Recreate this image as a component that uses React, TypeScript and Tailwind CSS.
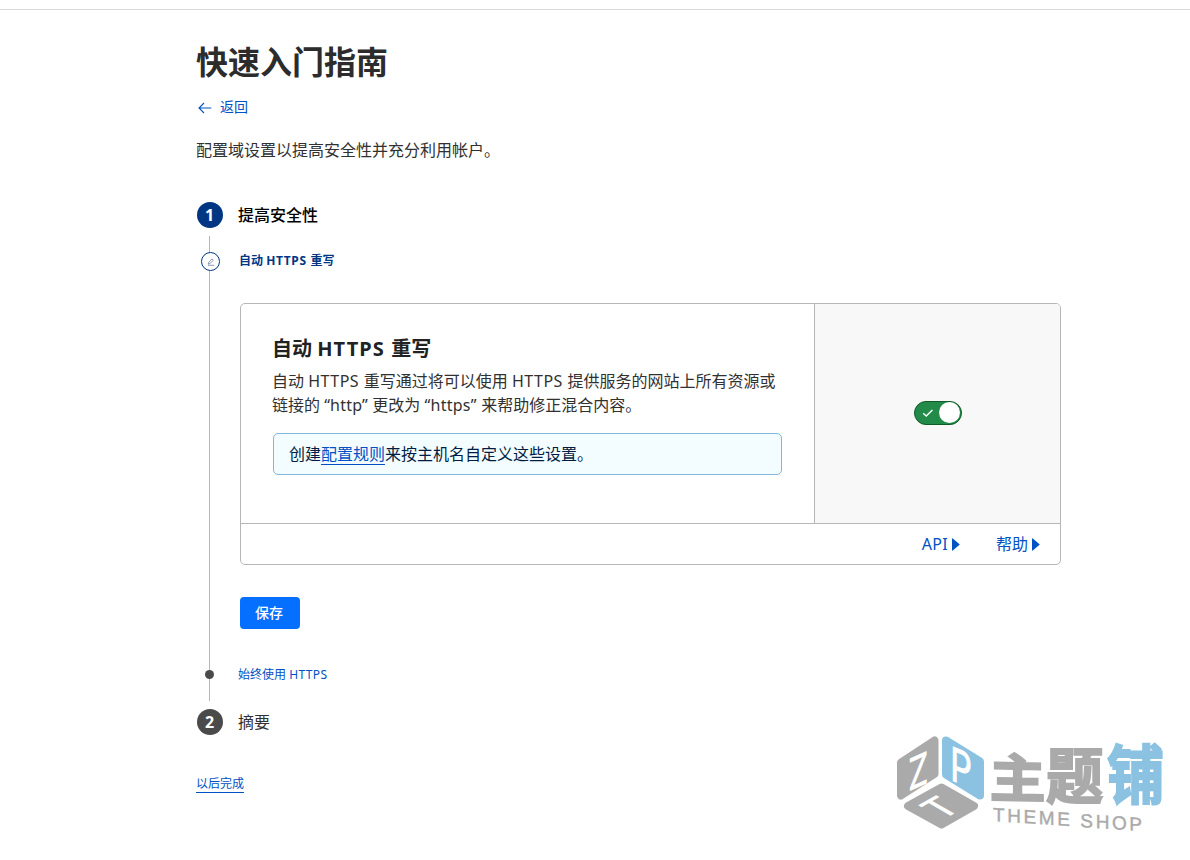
import type { ReactNode } from 'react';

function StepTitle({ index, children, active }: { index: number; children: ReactNode; active?: boolean }) {
  return (
    <div className="flex h-[26px] items-center gap-[15px]">
      <span
        className={
          active
            ? 'flex size-[26px] items-center justify-center rounded-full bg-[#003682] pr-px text-base font-bold text-white'
            : 'flex size-[26px] items-center justify-center rounded-full bg-[#4a4a4a] pr-px text-base font-bold text-white'
        }
      >
        {index}
      </span>
      <span className={active ? 'text-base font-medium text-black' : 'text-base text-[#313131]'}>{children}</span>
    </div>
  );
}

function Toggle() {
  return (
    <button className="flex h-6 w-12 items-center justify-between rounded-full border border-[#0f5a28] bg-[#228b49] pr-[0.5px] pl-[7px]">
      <svg width="12" height="12" viewBox="0 0 12 12" fill="none" stroke="#fff" strokeWidth="1.4">
        <path d="M1.2 6.3 4.2 9 10.4 2.9" />
      </svg>
      <span className="size-[21px] rounded-full bg-white" />
    </button>
  );
}

function FooterLink({ children }: { children: ReactNode }) {
  return (
    <a href="#" className="flex items-center gap-1 text-base leading-6 text-[#0051c3]">
      {children}
      <svg width="8" height="13" viewBox="0 0 8 13" fill="currentColor">
        <path d="M0 0.5H0.8L7.8 6.5 0.8 12.5H0Z" />
      </svg>
    </a>
  );
}

function Watermark() {
  return (
    <svg
      className="pointer-events-none absolute top-[708px] left-[890px] overflow-visible"
      width="300"
      height="152"
      viewBox="0 -20 300 152"
      fontFamily='"Noto Sans CJK SC", sans-serif'
    >
      <g strokeWidth="8" strokeLinejoin="round">
        <path d="M11 34.5 44.5 12.5V46L11 67.5Z" fill="#aaa" stroke="#aaa" />
        <path d="M56 12.5 90 33.5V67.5L56 46.5Z" fill="#8bc2e2" stroke="#8bc2e2" />
        <path d="M51.5 59.5 84 78 51.5 96.5 18 78Z" fill="#aaa" stroke="#aaa" />
      </g>
      <g fill="#fff" fontFamily="Inter, sans-serif" fontSize="32" fontWeight="500">
        <text transform="matrix(1 -0.45 0 1.4 18 64)">Z</text>
        <text transform="matrix(1.08 0.45 0 1.5 60 52)">P</text>
        <text transform="matrix(1.05 -0.6 1.15 0.66 52 92.5)" fontSize="30">
          T
        </text>
      </g>
      <g fontSize="54" fontWeight="700" strokeWidth="1.8">
        <text transform="matrix(1.04 0.02 0 0.97 99.5 69)" fill="#aaa" stroke="#aaa">
          主
        </text>
        <text transform="matrix(1.06 0 0 1.13 156 70.5)" fill="#aaa" stroke="#aaa">
          题
        </text>
        <text transform="matrix(1.06 0 0 1.18 217 70)" fill="#8bc2e2" stroke="#8bc2e2">
          铺
        </text>
      </g>
      <text
        transform="matrix(1 0.068 0 1 103 93)"
        fill="#aaa"
        fontFamily='"Liberation Sans", sans-serif'
        fontSize="19"
        stroke="#aaa"
        strokeWidth="0.4"
        textLength="149"
      >
        THEME SHOP
      </text>
    </svg>
  );
}

export default function App() {
  return (
    <div className="relative h-[860px] w-[1190px] overflow-hidden bg-white font-['Noto_Sans','Noto_Sans_CJK_SC',sans-serif] text-[#313131]">
      <div className="h-[10px] border-b border-[#d9d9d9]" />
      <main className="w-[1061px] pt-8 pl-[197px]">
        <h1 className="-ml-px text-[32px] leading-10 font-bold text-[#2c2c2c]">快速入门指南</h1>
        <a href="#" className="mt-[15px] flex h-5 items-center gap-2 text-sm text-[#0051c3]">
          <svg className="mt-0.5" width="15" height="14" viewBox="0 0 15 14" fill="none" stroke="currentColor" strokeWidth="1.1">
            <path d="M14.3 7H2M7 2 2 7 7 12" />
          </svg>
          返回
        </a>
        <p className="mt-[21px] mb-10 -ml-px text-base leading-6">配置域设置以提高安全性并充分利用帐户。</p>

        <StepTitle index={1} active>
          提高安全性
        </StepTitle>

        <section className="mt-2 mb-2 ml-3 h-[465px] border-l border-[#b6b6b6] pt-[15px]">
          <div className="-ml-[9px] flex h-5 items-center gap-[19px]">
            <span className="mt-px flex size-[19px] items-center justify-center rounded-full border border-[#003682] bg-white">
              <svg width="8" height="8" viewBox="0 0 8 8" fill="none" stroke="#6e7fa3" strokeWidth="0.8">
                <path d="M1.2 6.2 1.8 4.2 5 .9 6.3 2.2 3.1 5.5ZM1 7.3H7.2" />
              </svg>
            </span>
            <span className="text-xs font-bold text-[#003682]">
              自动 <span className="tracking-[0.65px]">HTTPS </span>重写
            </span>
          </div>

          <div className="mt-8 ml-[30px] h-[262px] rounded-[5px] border border-[#b6b6b6]">
            <div className="flex h-[220px] border-b border-[#b6b6b6]">
              <div className="w-[573px] shrink-0 px-8 pt-[31px]">
                <h2 className="-ml-px text-xl leading-7 font-bold text-[#222]">
                  自动 <span className="tracking-[1.1px]">HTTPS </span>重写
                </h2>
                <p className="mt-[6px] -ml-px text-base leading-6 whitespace-nowrap">
                  自动 <span className="tracking-[0.5px]">HTTPS </span>重写通过将可以使用{' '}
                  <span className="tracking-[0.5px]">HTTPS </span>提供服务的网站上所有资源或
                  <br />
                  链接的 <span className="tracking-[0.2px]">“http” </span>更改为{' '}
                  <span className="tracking-[0.25px]">“https” </span>来帮助修正混合内容。
                </p>
                <div className="mt-4 flex h-[42px] items-center rounded-[5px] border border-[#82b6dd] bg-[#f3fcff] px-[15px] text-base text-[#001c43]">
                  创建
                  <a href="#" className="mt-px border-b border-[#0051c3] leading-5 text-[#0051c3]">
                    配置规则
                  </a>
                  来按主机名自定义这些设置。
                </div>
              </div>
              <div className="flex flex-1 items-center justify-center rounded-tr border-l border-[#b6b6b6] bg-[#f8f8f8] pb-0.5">
                <Toggle />
              </div>
            </div>
            <div className="flex h-10 items-center justify-end gap-9 pr-5">
              <FooterLink>
                <span className="tracking-[0.3px]">API</span>
              </FooterLink>
              <FooterLink>帮助</FooterLink>
            </div>
          </div>

          <button className="mt-8 ml-[30px] flex h-8 w-[60px] items-center justify-center rounded bg-[#056fff] pr-0.5 text-sm font-medium text-white">
            保存
          </button>

          <div className="mt-9 -ml-[5px] flex h-5 items-center gap-6">
            <span className="mb-0.5 size-[9px] rounded-full bg-[#4a4a4a]" />
            <a href="#" className="text-xs text-[#0051c3]">
              始终使用 <span className="tracking-[0.4px]">HTTPS</span>
            </a>
          </div>
        </section>

        <StepTitle index={2}>摘要</StepTitle>

        <a href="#" className="mt-10 -ml-px inline-block border-b border-[#0051c3] text-xs leading-[17px] text-[#0051c3]">
          以后完成
        </a>
      </main>
      <Watermark />
    </div>
  );
}
